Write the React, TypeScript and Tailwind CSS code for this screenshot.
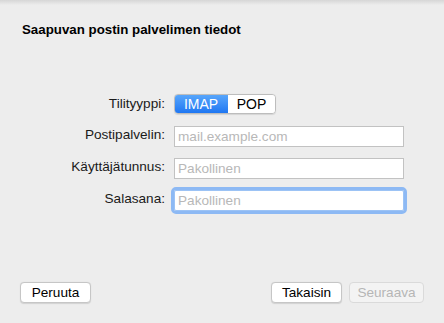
import React from "react";

const font = { fontFamily: '"Liberation Sans", Arial, sans-serif' };

const Field = ({ label, placeholder, focused }: { label: string; placeholder: string; focused?: boolean }) => (
    <div className="flex items-center h-[21px]">
        <label className="w-[166px] pr-[1px] text-right text-[13.6px] text-[#1a1a1a]">{label}</label>
        <div className="ml-[8px]">
            <input
                placeholder={placeholder}
                className={
                    focused
                        ? "w-[230px] h-[21px] bg-white border border-[#9cc3f5] rounded-[2px] outline-[3px] outline-[#8db9f4] outline-offset-0 px-[3px] text-[13.6px] placeholder-[#b8b8b8]"
                        : "w-[230px] h-[21px] bg-white border border-[#c2c2c2] px-[3px] text-[13.6px] placeholder-[#b8b8b8] outline-none"
                }
                style={font}
            />
        </div>
    </div>
);

export default function App() {
    return (
        <div className="w-[444px] h-[323px] bg-[#ededed] flex flex-col relative overflow-hidden" style={font}>
            {/* top shadow */}
            <div className="absolute top-0 left-0 right-0 h-[5px] bg-gradient-to-b from-[#d6d6d6] to-[#ededed]"></div>

            <div className="pt-[22px] pl-[22px]">
                <h1 className="text-[13.3px] leading-[16px] font-bold text-black">Saapuvan postin palvelimen tiedot</h1>
            </div>

            <div className="mt-[56px] flex flex-col gap-[11px]">
                <div className="flex items-center h-[20px]">
                    <span className="w-[166px] pr-[1px] text-right text-[13.6px] text-[#1a1a1a]">Tilityyppi:</span>
                    <div className="ml-[8px] flex h-[20px] rounded-[4px] overflow-hidden border border-[#bdbdbd] shadow-[0_0.5px_1px_rgba(0,0,0,0.1)]">
                        <div className="w-[54px] -my-[1px] -ml-[1px] flex items-center justify-center text-[14px] text-white bg-gradient-to-b from-[#5aa8fb] to-[#1b74f2]">
                            IMAP
                        </div>
                        <div className="w-[47px] flex items-center justify-center text-[14px] text-black bg-white">
                            POP
                        </div>
                    </div>
                </div>
                <Field label="Postipalvelin:" placeholder="mail.example.com" />
                <Field label="Käyttäjätunnus:" placeholder="Pakollinen" />
                <Field label="Salasana:" placeholder="Pakollinen" focused />
            </div>

            <div className="mt-auto pb-[20px] px-[20px] flex items-center">
                <button className="w-[71px] h-[21px] bg-white border border-[#c6c6c6] rounded-[4px] text-[13.6px] text-black shadow-[0_0.5px_1px_rgba(0,0,0,0.12)]">
                    Peruuta
                </button>
                <div className="ml-auto flex gap-[7px]">
                    <button className="w-[71px] h-[21px] bg-white border border-[#c6c6c6] rounded-[4px] text-[13.6px] text-black shadow-[0_0.5px_1px_rgba(0,0,0,0.12)]">
                        Takaisin
                    </button>
                    <button className="w-[75px] h-[21px] bg-[#f3f3f3] border border-[#dadada] rounded-[4px] text-[13.6px] text-[#b6b6b6]">
                        Seuraava
                    </button>
                </div>
            </div>
        </div>
    );
}
